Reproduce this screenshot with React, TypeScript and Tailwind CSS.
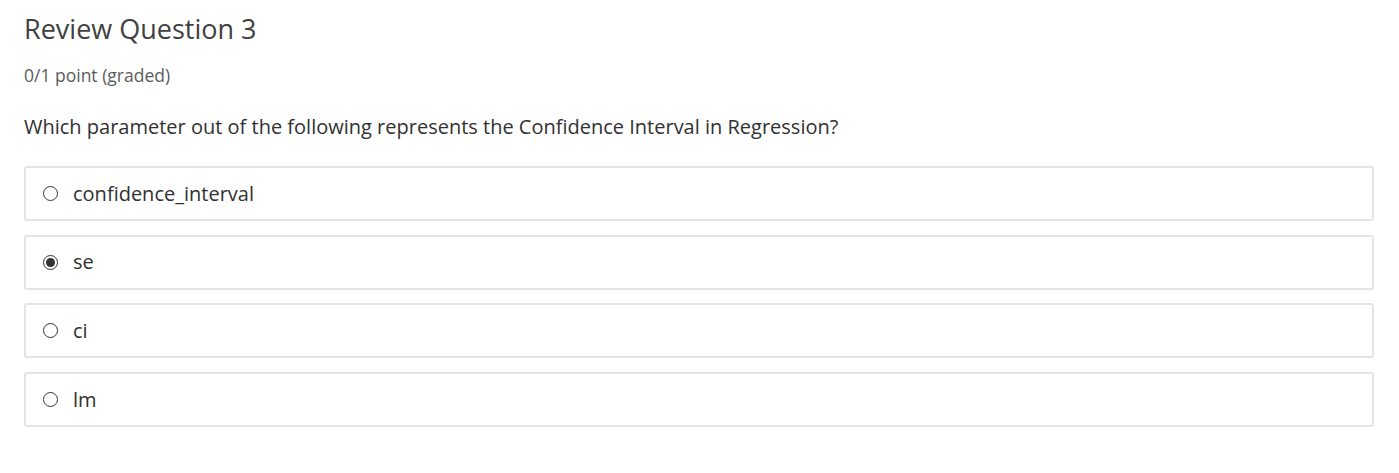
const options = [
  { id: 'a', label: 'confidence_interval' },
  { id: 'b', label: 'se' },
  { id: 'c', label: 'ci' },
  { id: 'd', label: 'lm' },
];

const Radio = ({ checked }: { checked: boolean }) => (
  <span className="flex h-[15px] w-[15px] shrink-0 items-center justify-center rounded-full border border-[#333]">
    {checked && <span className="h-[9px] w-[9px] rounded-full bg-[#333]" />}
  </span>
);

export default function App() {
  const selected = 'b';
  return (
    <div className="min-h-[473px] bg-white px-6 pt-[11px] font-['Open_Sans',sans-serif]">
      <h2 className="text-[27px] leading-[36px] text-[#414141]">Review Question 3</h2>
      <div className="mt-[16px] text-[17.5px] leading-[24px] text-[#5b5b5b]">0/1 point (graded)</div>
      <p className="mt-[26px] text-[20px] leading-[28px] text-[#313131]">
        Which parameter out of the following represents the Confidence Interval in Regression?
      </p>
      <div className="mt-[25px] flex w-[1350px] flex-col gap-[13.7px]">
        {options.map((o) => (
          <label
            key={o.id}
            className="flex h-[55px] items-center gap-[15px] rounded-[3px] border-2 border-[#e4e4e4] px-[17px] text-[20px] text-[#313131]"
          >
            <Radio checked={o.id === selected} />
            <span>{o.label}</span>
          </label>
        ))}
      </div>
    </div>
  );
}
